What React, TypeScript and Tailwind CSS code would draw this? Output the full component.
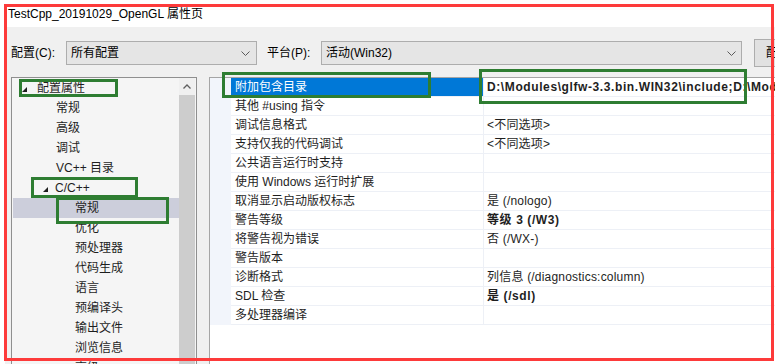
import React from 'react';

const treeItems = [
  { label: '配置属性', pad: 'pl-[9px]', arrow: true, gap: 'mr-[10px]' },
  { label: '常规', pad: 'pl-[43px]' },
  { label: '高级', pad: 'pl-[43px]' },
  { label: '调试', pad: 'pl-[43px]' },
  { label: 'VC++ 目录', pad: 'pl-[43px]' },
  { label: 'C/C++', pad: 'pl-[30px]', arrow: true, gap: 'mr-[7px]' },
  { label: '常规', pad: 'pl-[62px]', selected: true },
  { label: '优化', pad: 'pl-[62px]' },
  { label: '预处理器', pad: 'pl-[62px]' },
  { label: '代码生成', pad: 'pl-[62px]' },
  { label: '语言', pad: 'pl-[62px]' },
  { label: '预编译头', pad: 'pl-[62px]' },
  { label: '输出文件', pad: 'pl-[62px]' },
  { label: '浏览信息', pad: 'pl-[62px]' },
  { label: '高级', pad: 'pl-[62px]' },
];

const props = [
  { name: '附加包含目录', value: 'D:\\Modules\\glfw-3.3.bin.WIN32\\include;D:\\Modules\\glew-2.1.0\\include;%(AdditionalIncludeDirectories)', bold: true, selected: true },
  { name: '其他 #using 指令', value: '' },
  { name: '调试信息格式', value: '<不同选项>' },
  { name: '支持仅我的代码调试', value: '<不同选项>' },
  { name: '公共语言运行时支持', value: '' },
  { name: '使用 Windows 运行时扩展', value: '' },
  { name: '取消显示启动版权标志', value: '是 (/nologo)' },
  { name: '警告等级', value: '等级 3 (/W3)', bold: true },
  { name: '将警告视为错误', value: '否 (/WX-)' },
  { name: '警告版本', value: '' },
  { name: '诊断格式', value: '列信息 (/diagnostics:column)' },
  { name: 'SDL 检查', value: '是 (/sdl)', bold: true },
  { name: '多处理器编译', value: '' },
];

const Chevron = () => (
  <svg width="9" height="5" viewBox="0 0 9 5" className="shrink-0">
    <polyline points="0.5,0.5 4.5,4.5 8.5,0.5" fill="none" stroke="#5a5a5a" strokeWidth="1" />
  </svg>
);

const Expanded = () => (
  <svg width="5" height="5" viewBox="0 0 5 5" className="shrink-0 mt-[2px]">
    <polygon points="5,0 5,5 0,5" fill="#1e1e1e" />
  </svg>
);

export default function App() {
  return (
    <div className="relative w-[775px] h-[364px] overflow-hidden bg-white text-[12px] text-black font-['Liberation_Sans','Noto_Sans_CJK_SC',sans-serif]">
      {/* title bar */}
      <div className="h-[27px] flex items-center pl-[8px] leading-none">TestCpp_20191029_OpenGL 属性页</div>

      <div className="ml-[5px] h-[337px] bg-[#f0f0f0] pl-[6px] pt-[14px] overflow-hidden">
        {/* configuration row */}
        <div className="flex items-center h-[24px]">
          <span className="w-[55px] shrink-0">配置(C):</span>
          <div className="w-[191px] h-[24px] shrink-0 flex items-center justify-between pl-[4px] pr-[6px] bg-[#e5e5e5] border border-[#adadad]">
            <span>所有配置</span>
            <Chevron />
          </div>
          <span className="w-[54px] ml-[10px] shrink-0">平台(P):</span>
          <div className="w-[421px] h-[24px] shrink-0 flex items-center justify-between pl-[4px] pr-[5px] bg-[#e5e5e5] border border-[#adadad]">
            <span>活动(Win32)</span>
            <Chevron />
          </div>
          <div className="ml-[12px] w-[110px] h-[28px] shrink-0 flex items-center pl-[11px] bg-[#e1e1e1] border border-[#adadad] whitespace-nowrap">
            配置管理器(O)...
          </div>
        </div>

        {/* panels */}
        <div className="flex mt-[12px]">
          {/* tree */}
          <div className="w-[186px] h-[300px] shrink-0 flex border border-[#8f8f8f] bg-[#f5f5f5]">
            <div className="flex-1 flex flex-col">
              {treeItems.map((item, i) => (
                <div
                  key={i}
                  className={`ml-[1px] h-[20px] shrink-0 flex items-center whitespace-nowrap text-[#1e1e1e] ${item.pad} ${item.selected ? 'bg-[#cccedb]' : ''}`}
                >
                  {item.arrow && (
                    <span className={item.gap}>
                      <Expanded />
                    </span>
                  )}
                  <span>{item.label}</span>
                </div>
              ))}
            </div>
            <div className="w-[17px] pr-[1px] flex flex-col shrink-0">
              <div className="h-[17px] flex items-center justify-center bg-[#f0f0f0]">
                <svg width="8" height="5" viewBox="0 0 8 5">
                  <polyline points="0.5,4.5 4,1 7.5,4.5" fill="none" stroke="#606060" strokeWidth="1.3" />
                </svg>
              </div>
              <div className="flex-1 bg-[#cdcdcd]" />
            </div>
          </div>

          {/* property grid */}
          <div className="ml-[12px] w-[600px] h-[300px] shrink-0 border border-[#a5a5a5] bg-white">
            {props.map((p, i) => (
              <div key={i} className="flex h-[19px]">
                <div className="w-[21px] shrink-0 bg-[#f2f5fb]" />
                <div
                  className={`w-[253px] shrink-0 pl-[4px] flex items-center whitespace-nowrap border-b border-r border-[#edf0f6] ${
                    p.selected ? 'bg-[#0078d7] text-white' : 'text-[#1e1e1e]'
                  }`}
                >
                  {p.name}
                </div>
                <div
                  className={`flex-1 pl-[3px] flex items-center whitespace-nowrap overflow-hidden border-b border-[#edf0f6] text-[#1e1e1e] ${
                    p.bold ? 'font-bold tracking-[0.6px]' : 'tracking-[0.2px]'
                  }`}
                >
                  {p.value}
                </div>
              </div>
            ))}
          </div>
        </div>
      </div>

      {/* annotations */}
      <div className="absolute left-[4px] top-[4px] w-[770px] h-[357px] border-[3px] border-[#fd3a3a] pointer-events-none" />
      <div className="absolute left-[19px] top-[79px] w-[99px] h-[18px] border-[3px] border-[#2e7d32]" />
      <div className="absolute left-[31px] top-[177px] w-[107px] h-[21px] border-[3px] border-[#2e7d32]" />
      <div className="absolute left-[56px] top-[197px] w-[113px] h-[27px] border-[3px] border-[#2e7d32]" />
      <div className="absolute left-[222px] top-[72px] w-[209px] h-[26px] border-[3px] border-[#2e7d32]" />
      <div className="absolute left-[479px] top-[69px] w-[268px] h-[35px] border-[3px] border-[#2e7d32]" />
    </div>
  );
}
